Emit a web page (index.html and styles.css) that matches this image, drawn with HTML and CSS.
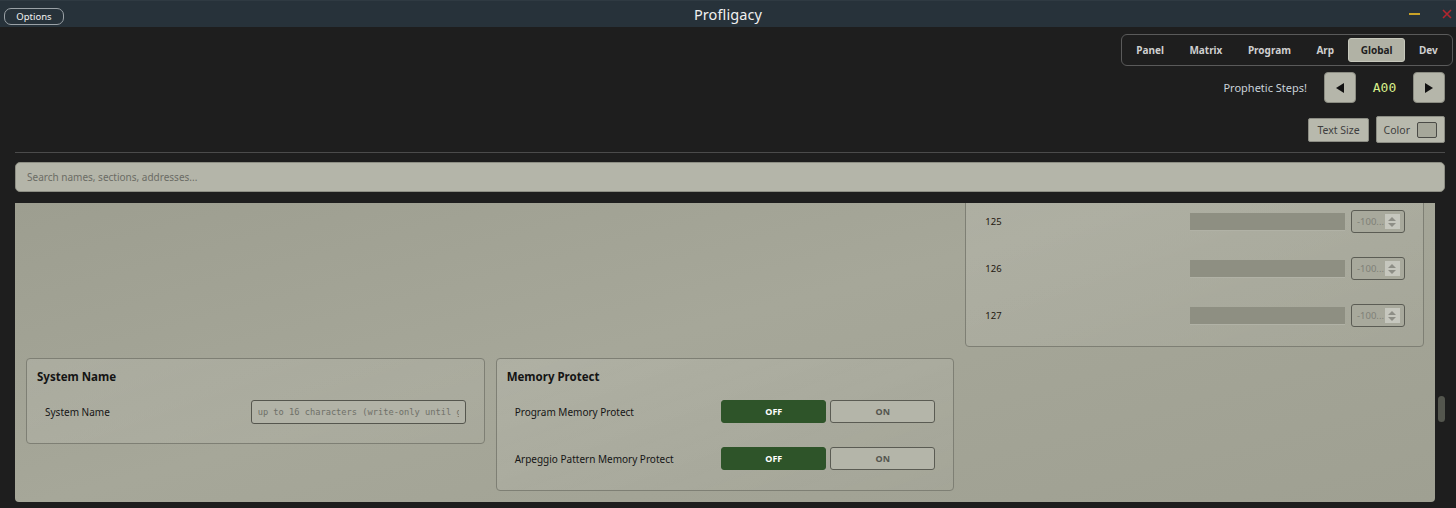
FILE: index.html
```html
<!DOCTYPE html>
<html lang="en">
  <head>
    <meta charset="UTF-8" />
    <meta name="viewport" content="width=device-width, initial-scale=1.0" />
    <title>Profligacy</title>
    <link rel="stylesheet" href="styles.css">
  </head>
  <body>
    <header class="titlebar">
      <div class="titlebar-left">
        <button class="options-btn">Options</button>
      </div>
      <div class="app-title">Profligacy</div>
      <div class="win-ctrls">
        <span class="win-min"></span>
        <svg class="win-close" width="10" height="10" viewBox="0 0 10 10">
          <path d="M1 1 L9 9 M9 1 L1 9" stroke="#b3262e" stroke-width="1.6" fill="none" />
        </svg>
      </div>
    </header>

    <main class="main">
      <div class="top-tools">
        <nav class="tabs">
          <span class="tab">Panel</span>
          <span class="tab">Matrix</span>
          <span class="tab">Program</span>
          <span class="tab">Arp</span>
          <span class="tab active">Global</span>
          <span class="tab">Dev</span>
        </nav>

        <div class="steps-row">
          <span class="steps-label">Prophetic Steps!</span>
          <button class="arrow-btn">
            <svg width="10" height="12" viewBox="0 0 10 12"><polygon points="9,1 9,11 1,6" fill="#111" /></svg>
          </button>
          <span class="step-value">A00</span>
          <button class="arrow-btn">
            <svg width="10" height="12" viewBox="0 0 10 12"><polygon points="1,1 1,11 9,6" fill="#111" /></svg>
          </button>
        </div>

        <div class="tools-row">
          <button class="tool-btn">Text Size</button>
          <button class="tool-btn color-btn">Color <span class="swatch"></span></button>
        </div>
      </div>

      <div class="divider"></div>

      <input class="search" type="text" placeholder="Search names, sections, addresses..." />

      <div class="scroll-wrap">
        <div class="panel">
          <div class="sections">
            <!-- tail of the matrix slot list -->
            <section class="card slots">
              <div class="row"><span class="num">125</span><span class="grow"></span><span class="slider"></span><span class="spin"><span class="spin-text">-100...</span><span class="spin-arrows"><i class="up"></i><i class="down"></i></span></span></div>
              <div class="row"><span class="num">126</span><span class="grow"></span><span class="slider"></span><span class="spin"><span class="spin-text">-100...</span><span class="spin-arrows"><i class="up"></i><i class="down"></i></span></span></div>
              <div class="row"><span class="num">127</span><span class="grow"></span><span class="slider"></span><span class="spin"><span class="spin-text">-100...</span><span class="spin-arrows"><i class="up"></i><i class="down"></i></span></span></div>
            </section>

            <section class="card sysname">
              <h3 class="card-title">System Name</h3>
              <div class="row">
                <span class="label">System Name</span>
                <span class="grow"></span>
                <input class="name-input" type="text" placeholder="up to 16 characters (write-only until g" />
              </div>
            </section>

            <section class="card memprotect">
              <h3 class="card-title">Memory Protect</h3>
              <div class="row">
                <span class="label">Program Memory Protect</span>
                <span class="grow"></span>
                <div class="toggle"><button class="tg on-sel">OFF</button><button class="tg">ON</button></div>
              </div>
              <div class="row">
                <span class="label">Arpeggio Pattern Memory Protect</span>
                <span class="grow"></span>
                <div class="toggle"><button class="tg on-sel">OFF</button><button class="tg">ON</button></div>
              </div>
            </section>
          </div>
        </div>
        <div class="scroll-track"><div class="scroll-thumb"></div></div>
      </div>
    </main>
  </body>
</html>
```

FILE: styles.css
```css
* {
  box-sizing: border-box;
}
html,
body {
  margin: 0;
  height: 100%;
}
body {
  background-color: #1e1e1e;
  font-family: "Noto Sans", "Open Sans", sans-serif;
  overflow: hidden;
  display: flex;
  flex-direction: column;
}
button,
input {
  font-family: inherit;
}

/* window title bar */
.titlebar {
  height: 27px;
  flex: none;
  background-color: #27323a;
  border-top: 1px solid #2f3a42;
  display: grid;
  grid-template-columns: 1fr auto 1fr;
  align-items: center;
}
.options-btn {
  margin-left: 4px;
  width: 60px;
  height: 17px;
  padding: 0;
  background: transparent;
  border: 1px solid #9aa1a6;
  border-radius: 7px;
  color: #f2f2f2;
  font-size: 9.5px;
  line-height: 15px;
}
.app-title {
  color: #f0f0f0;
  font-size: 14.5px;
  letter-spacing: 0.1px;
}
.win-ctrls {
  display: flex;
  justify-content: flex-end;
  align-items: center;
  gap: 22px;
  padding-right: 4px;
}
.win-min {
  width: 11px;
  height: 2px;
  background-color: #c9a227;
}

/* main area */
.main {
  flex: 1;
  min-height: 0;
  display: flex;
  flex-direction: column;
  padding: 7px 11px 6px 15px;
}
.top-tools {
  display: flex;
  flex-direction: column;
  align-items: flex-end;
}
.tabs {
  display: flex;
  gap: 3px;
  margin-right: -8px;
  padding: 3px;
  height: 32px;
  border: 1px solid #5a5a5a;
  border-radius: 6px;
}
.tab {
  padding: 0 11.25px;
  height: 24px;
  line-height: 24px;
  color: #cfcfcf;
  font-size: 10px;
  font-weight: 700;
  border-radius: 3px;
}
.tab.active {
  background-color: #b1b2a5;
  color: #1e1e1e;
  border: 1px solid #c7c8bc;
  line-height: 22px;
}

.steps-row {
  display: flex;
  align-items: center;
  margin-top: 6px;
  height: 31px;
}
.steps-label {
  color: #c9d2da;
  font-size: 11px;
  margin-right: 17px;
}
.arrow-btn {
  width: 32px;
  height: 31px;
  padding: 0;
  background-color: #b5b6aa;
  border: 1px solid #8b8c82;
  border-radius: 4px;
  display: flex;
  align-items: center;
  justify-content: center;
}
.step-value {
  width: 57px;
  text-align: center;
  color: #d8f08c;
  font-family: "DejaVu Sans Mono", monospace;
  font-size: 13px;
}

.tools-row {
  display: flex;
  align-items: center;
  gap: 7px;
  margin-top: 13px;
}
.tool-btn {
  height: 24px;
  padding: 0 8.5px;
  background-color: #b8b9ad;
  border: 1px solid #8c8d84;
  border-radius: 2px;
  color: #3e3e3e;
  font-size: 10.5px;
  display: flex;
  align-items: center;
}
.color-btn {
  height: 27px;
  gap: 7px;
  padding: 0 7px 0 6.5px;
}
.swatch {
  width: 20px;
  height: 16px;
  background-color: #a6a79a;
  border: 1px solid #4a4a46;
  border-radius: 2px;
}

.divider {
  height: 1px;
  background-color: #4b4b4b;
  margin-top: 9px;
}

.search {
  margin-top: 9px;
  height: 30px;
  width: 100%;
  padding: 0 11px;
  background-color: #b4b5a9;
  border: 1px solid #8d8e84;
  border-radius: 5px;
  color: #333;
  font-size: 10px;
  outline: none;
}
.search::placeholder {
  color: #6b6c65;
}

/* scrolling sections area */
.scroll-wrap {
  flex: 1;
  min-height: 0;
  margin-top: 11px;
  margin-right: -2px;
  display: flex;
  gap: 3px;
}
.panel {
  flex: 1;
  overflow: hidden;
  display: flex;
  flex-direction: column;
  justify-content: flex-end;
  border-radius: 0 0 4px 4px;
  background: linear-gradient(165deg, #9d9e90 0%, #a6a799 45%, #a2a395 75%, #9fa092 100%);
}
.scroll-track {
  width: 9px;
  padding-top: 193px;
}
.scroll-thumb {
  width: 7px;
  height: 26px;
  border-radius: 4px;
  background-color: #54564e;
}

.sections {
  flex: none;
  display: grid;
  grid-template-columns: repeat(3, 1fr);
  column-gap: 11px;
  row-gap: 11px;
  align-items: start;
  padding: 11px 11px 11px;
}
.card {
  background: linear-gradient(160deg, rgba(255, 255, 255, 0.1), rgba(255, 255, 255, 0.03));
  border: 1px solid #7e7f74;
  border-radius: 4px;
  padding: 10px 10px 19px;
  display: flex;
  flex-direction: column;
  gap: 24px;
}
.slots {
  grid-column: 3;
  grid-row: 1;
}
.sysname {
  grid-column: 1;
  grid-row: 2;
  padding-bottom: 20px;
}
.memprotect {
  grid-column: 2;
  grid-row: 2;
  padding-bottom: 20px;
}
.card-title {
  margin: 0 0 -9px;
  height: 16px;
  line-height: 16px;
  font-size: 11.5px;
  font-weight: 700;
  color: #141414;
}
.row {
  display: flex;
  align-items: center;
  height: 23px;
  margin: 0 8px;
}
.grow {
  flex: 1;
}
.label {
  font-size: 10px;
  color: #151515;
}
.num {
  font-size: 9.5px;
  color: #22180f;
  margin-left: 1px;
}
.slider {
  width: 155px;
  height: 18px;
  background-color: #8e8f82;
  border-bottom: 1px solid #b1b2a6;
}
.spin {
  width: 54px;
  height: 23px;
  margin-left: 6px;
  border: 1px solid #5b5c54;
  border-radius: 3px;
  background-color: #a8a99c;
  display: flex;
  align-items: center;
  padding: 0 4px 0 5px;
}
.spin-text {
  flex: 1;
  font-size: 9.5px;
  color: #7f8077;
}
.spin-arrows {
  width: 15px;
  height: 15px;
  background-color: #c6c7be;
  display: flex;
  flex-direction: column;
  align-items: center;
  justify-content: center;
  gap: 2px;
}
.spin-arrows i {
  width: 0;
  height: 0;
  border-left: 4px solid transparent;
  border-right: 4px solid transparent;
}
.spin-arrows .up {
  border-bottom: 4px solid #8d8e86;
}
.spin-arrows .down {
  border-top: 4px solid #8d8e86;
}

.name-input {
  width: 215px;
  height: 24px;
  padding: 0 6px;
  background-color: #b2b3a7;
  border: 1px solid #55564e;
  border-radius: 3px;
  font-family: "DejaVu Sans Mono", monospace;
  font-size: 8.7px;
  outline: none;
}
.name-input::placeholder {
  color: #6f7068;
}

.toggle {
  display: flex;
  gap: 4px;
}
.tg {
  width: 105px;
  height: 23px;
  padding: 0;
  background-color: #b4b5a9;
  border: 1px solid #5a5b53;
  border-radius: 3px;
  color: #55564f;
  font-size: 9px;
  font-weight: 700;
}
.tg.on-sel {
  background-color: #2e5429;
  border-color: #2e5429;
  color: #ffffff;
}
```
